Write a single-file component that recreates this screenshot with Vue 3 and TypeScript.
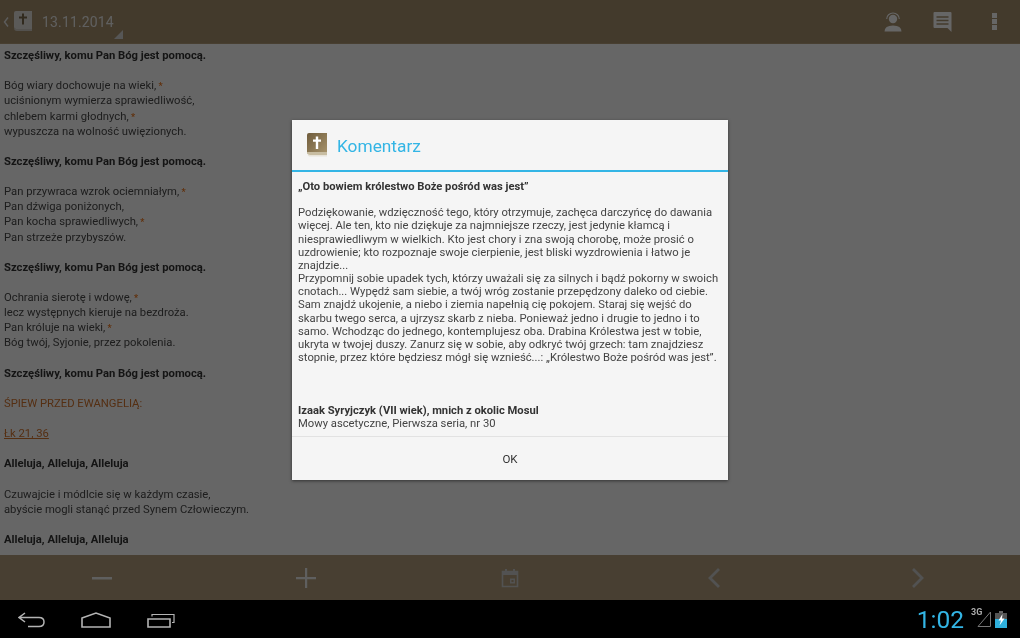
<script setup lang="ts">
interface Line {
  text: string;
  kind?: "bold" | "red" | "link" | "gap";
  star?: boolean;
}

const psalm: Line[] = [
  { text: "Szczęśliwy, komu Pan Bóg jest pomocą.", kind: "bold" },
  { text: "", kind: "gap" },
  { text: "Bóg wiary dochowuje na wieki,", star: true },
  { text: "uciśnionym wymierza sprawiedliwość," },
  { text: "chlebem karmi głodnych,", star: true },
  { text: "wypuszcza na wolność uwięzionych." },
  { text: "", kind: "gap" },
  { text: "Szczęśliwy, komu Pan Bóg jest pomocą.", kind: "bold" },
  { text: "", kind: "gap" },
  { text: "Pan przywraca wzrok ociemniałym,", star: true },
  { text: "Pan dźwiga poniżonych," },
  { text: "Pan kocha sprawiedliwych,", star: true },
  { text: "Pan strzeże przybyszów." },
  { text: "", kind: "gap" },
  { text: "Szczęśliwy, komu Pan Bóg jest pomocą.", kind: "bold" },
  { text: "", kind: "gap" },
  { text: "Ochrania sierotę i wdowę,", star: true },
  { text: "lecz występnych kieruje na bezdroża." },
  { text: "Pan króluje na wieki,", star: true },
  { text: "Bóg twój, Syjonie, przez pokolenia." },
  { text: "", kind: "gap" },
  { text: "Szczęśliwy, komu Pan Bóg jest pomocą.", kind: "bold" },
  { text: "", kind: "gap" },
  { text: "ŚPIEW PRZED EWANGELIĄ:", kind: "red" },
  { text: "", kind: "gap" },
  { text: "Łk 21, 36", kind: "link" },
  { text: "", kind: "gap" },
  { text: "Alleluja, Alleluja, Alleluja", kind: "bold" },
  { text: "", kind: "gap" },
  { text: "Czuwajcie i módlcie się w każdym czasie," },
  { text: "abyście mogli stanąć przed Synem Człowieczym." },
  { text: "", kind: "gap" },
  { text: "Alleluja, Alleluja, Alleluja", kind: "bold" },
];

const commentary = [
  "Podziękowanie, wdzięczność tego, który otrzymuje, zachęca darczyńcę do dawania",
  "więcej. Ale ten, kto nie dziękuje za najmniejsze rzeczy, jest jedynie kłamcą i",
  "niesprawiedliwym w wielkich. Kto jest chory i zna swoją chorobę, może prosić o",
  "uzdrowienie; kto rozpoznaje swoje cierpienie, jest bliski wyzdrowienia i łatwo je",
  "znajdzie...",
  "Przypomnij sobie upadek tych, którzy uważali się za silnych i bądź pokorny w swoich",
  "cnotach... Wypędź sam siebie, a twój wróg zostanie przepędzony daleko od ciebie.",
  "Sam znajdź ukojenie, a niebo i ziemia napełnią cię pokojem. Staraj się wejść do",
  "skarbu twego serca, a ujrzysz skarb z nieba. Ponieważ jedno i drugie to jedno i to",
  "samo. Wchodząc do jednego, kontemplujesz oba. Drabina Królestwa jest w tobie,",
  "ukryta w twojej duszy. Zanurz się w sobie, aby odkryć twój grzech: tam znajdziesz",
  "stopnie, przez które będziesz mógł się wznieść...: „Królestwo Boże pośród was jest”.",
];
</script>

<template>
  <div class="screen">
    <div class="app">
      <header class="topbar">
        <div class="home">
          <svg class="chev" width="6" height="12" viewBox="0 0 6 12">
            <path d="M5 1.500 1.500 6 5 10.500" fill="none" stroke="#e6e6e6" stroke-width="1.400" />
          </svg>
          <svg width="18" height="21" viewBox="0 0 18 21">
            <path d="M0 2q0-2 2-2h16v18H2q-2 0-2-2z" fill="#e4e2dc" />
            <path d="M0 17q0 3 3 3h15v-2H2z" fill="#cfcbc2" />
            <path d="M8 2.500h2v3h3v2h-3v6H8v-6H5v-2h3z" fill="#7a6a4c" />
          </svg>
          <span class="date">13.11.2014</span>
          <span class="corner"></span>
        </div>
        <div class="actions">
          <svg width="20" height="20" viewBox="0 0 20 20">
            <circle cx="10" cy="7" r="4.200" fill="#fff" />
            <path d="M3.700 7a6.300 6 0 0 1 12.600 0" fill="none" stroke="#fff" stroke-width="1.100" />
            <path d="M1.500 19.500q0-6 8.500-6t8.500 6z" fill="#fff" />
          </svg>
          <svg width="20" height="20" viewBox="0 0 20 20">
            <path d="M1.500 0h16q1 0 1 1v19l-4-4h-13q-1 0-1-1V1q0-1 1-1z" fill="#fff" />
            <path d="M3.500 5h12M3.500 8.500h12M3.500 12h12" stroke="#a8916e" stroke-width="1.500" />
          </svg>
          <svg class="more" width="5" height="17" viewBox="0 0 5 17">
            <path d="M0 0h5v5H0zM0 6h5v5H0zM0 12h5v5H0z" fill="#fff" />
          </svg>
        </div>
      </header>

      <main class="reading">
        <div v-for="(line, i) in psalm" :key="i" class="line" :class="line.kind">
          {{ line.text }}<span v-if="line.star" class="star"> *</span>
        </div>
      </main>

      <footer class="bottombar">
        <svg width="20" height="20" viewBox="0 0 20 20"><path d="M0 9h20v2.500H0z" fill="#eee" /></svg>
        <svg width="20" height="20" viewBox="0 0 20 20"><path d="M0 9h9V0h2.200v9H20v2.200h-8.800V20H9v-8.800H0z" fill="#eee" /></svg>
        <svg width="18" height="20" viewBox="0 0 18 20">
          <path d="M1.500 3.500h15v15h-15z" fill="none" stroke="#ccc" stroke-width="1.600" />
          <path d="M1 3h16v4H1zM4 1h2v3H4zM12 1h2v3h-2z" fill="#ccc" />
          <path d="M9 10.500h5v5H9z" fill="#ccc" />
          <path d="M10.500 12h2v2h-2z" fill="#b39f7d" />
        </svg>
        <svg width="14" height="20" viewBox="0 0 14 20"><path d="M12 1 3 10l9 9" fill="none" stroke="#ccc" stroke-width="2.800" /></svg>
        <svg width="14" height="20" viewBox="0 0 14 20"><path d="M2 1l9 9-9 9" fill="none" stroke="#ccc" stroke-width="2.800" /></svg>
      </footer>
    </div>

    <nav class="statusbar">
      <div class="navkeys">
        <svg width="27" height="16" viewBox="0 0 27 16">
          <path d="M7 1 1 5.500l6 4.500M1 5.500h20q5 0 5 4.500t-5 4.500H10" fill="none" stroke="#b4b4b4" stroke-width="1.500" />
        </svg>
        <svg width="30" height="16" viewBox="0 0 30 16">
          <path d="M1 6 15 1l14 5v9H1z" fill="none" stroke="#b4b4b4" stroke-width="1.600" />
        </svg>
        <svg width="28" height="15" viewBox="0 0 28 15">
          <path d="M1 6h22v8H1z" fill="none" stroke="#b4b4b4" stroke-width="1.600" />
          <path d="M5 3.500V1.500h22v8h-2" fill="none" stroke="#b4b4b4" stroke-width="1.200" />
        </svg>
      </div>
      <div class="tray">
        <span class="clock">1:02</span>
        <div class="signal">
          <span class="net">3G</span>
          <svg width="14" height="16" viewBox="0 0 14 16">
            <path d="M13.500 1v14.500H1z" fill="none" stroke="#777" stroke-width="1" />
          </svg>
        </div>
        <svg class="battery" width="12" height="17" viewBox="0 0 12 17">
          <path d="M4 0h4v2H4z" fill="#666" />
          <path d="M0 2h12v6H0z" fill="#555" />
          <path d="M0 8h12v9H0z" fill="#2fb0dd" />
          <path d="M7.500 3 3.500 9.500H6L4.500 14.500l5-7H7z" fill="#fff" />
        </svg>
      </div>
    </nav>

    <div class="scrim">
      <section class="dialog">
        <div class="dialog-head">
          <svg width="22" height="25" viewBox="0 0 22 25">
            <defs>
              <linearGradient id="cover" x1="0" y1="0" x2="1" y2="1">
                <stop offset="0" stop-color="#6f5c3c" />
                <stop offset="1" stop-color="#a8946c" />
              </linearGradient>
            </defs>
            <path d="M1 2q0-2 2-2h18v21H3q-2 0-2-2z" fill="url(#cover)" />
            <path d="M1 19q0 3 3 3h17v-3z" fill="#c8bda2" />
            <path d="M1.500 22h19.500v1.500H3z" fill="#e8e4da" />
            <path d="M9.800 3.500h2.400v3H15v2.200h-2.800v7.300H9.800V8.700H7V6.500h2.800z" fill="#fff" />
          </svg>
          <h2>Komentarz</h2>
        </div>
        <div class="dialog-body">
          <p class="bold">„Oto bowiem królestwo Boże pośród was jest”</p>
          <p class="blank"></p>
          <p v-for="(row, i) in commentary" :key="i">{{ row }}</p>
          <div class="source">
            <p class="bold">Izaak Syryjczyk (VII wiek), mnich z okolic Mosul</p>
            <p>Mowy ascetyczne, Pierwsza seria, nr 30</p>
          </div>
        </div>
        <button class="ok">OK</button>
      </section>
    </div>
  </div>
</template>

<style scoped>
.screen {
  position: relative;
  width: 1020px;
  height: 638px;
  overflow: hidden;
  font-family: Roboto, "Noto Sans", sans-serif;
  background: #000;
  filter: blur(0.3px);
}

.app {
  height: 600px;
  display: flex;
  flex-direction: column;
  background: #fff;
}

.topbar {
  height: 44px;
  flex: none;
  display: flex;
  justify-content: space-between;
  align-items: center;
  background: #a8916e;
  border-bottom: 1px solid #b39d7c;
  box-sizing: border-box;
}

.home {
  display: flex;
  align-items: center;
  position: relative;
  width: 123px;
  height: 100%;
  padding-left: 3px;
  box-sizing: border-box;
}

.chev {
  margin-right: 5px;
}

.date {
  margin-left: 10px;
  font-size: 14px;
  letter-spacing: 0.15px;
  color: #eee;
}

.corner {
  position: absolute;
  right: 0;
  bottom: 4px;
  width: 0;
  height: 0;
  border-left: 9px solid transparent;
  border-bottom: 9px solid #d8d8d8;
}

.actions {
  display: flex;
  align-items: center;
  gap: 30px;
  padding-right: 23px;
}

.more {
  margin-left: 9px;
}

.reading {
  flex: 1;
  overflow: hidden;
  padding: 4px 4px 0;
  font-size: 11.25px;
  line-height: 15.13px;
  color: #4a4a4a;
}

.line {
  height: 15.13px;
  white-space: nowrap;
}

.line.bold {
  font-weight: 700;
  color: #333;
}

.line.red {
  color: #d4752f;
}

.line.link {
  color: #d4752f;
  text-decoration: underline;
}

.star {
  color: #f07a20;
  font-size: 9px;
  font-weight: 700;
}

.bottombar {
  height: 45px;
  flex: none;
  display: grid;
  grid-template-columns: repeat(5, 1fr);
  justify-items: center;
  align-items: center;
  background: #b39f7d;
}

.statusbar {
  height: 38px;
  flex: none;
  display: flex;
  justify-content: space-between;
  align-items: center;
  background: #000;
}

.navkeys {
  display: flex;
  align-items: center;
  gap: 36px;
  padding-left: 18px;
  padding-top: 2px;
}

.tray {
  display: flex;
  align-items: center;
  padding-right: 13px;
}

.clock {
  font-size: 24.5px;
  font-weight: 400;
  color: #33b5e5;
  margin-right: 13px;
  padding-top: 1px;
}

.signal {
  position: relative;
  width: 14px;
  height: 16px;
  margin-right: 4px;
}

.signal svg {
  display: block;
}

.net {
  position: absolute;
  left: -6px;
  top: -4px;
  font-size: 9px;
  font-weight: 700;
  color: #aaa;
}

.scrim {
  position: absolute;
  left: 0;
  top: 0;
  width: 1020px;
  height: 600px;
  background: rgba(0, 0, 0, 0.6);
}

.dialog {
  position: absolute;
  left: 292px;
  top: 120px;
  width: 436px;
  height: 360px;
  display: flex;
  flex-direction: column;
  background: #f5f5f5;
  box-shadow: 0 1px 3px rgba(0, 0, 0, 0.5);
}

.dialog-head {
  height: 50px;
  flex: none;
  display: flex;
  align-items: center;
  gap: 9px;
  padding-left: 14px;
  border-bottom: 2px solid #33b5e5;
}

.dialog-head h2 {
  margin: 0;
  padding-top: 1px;
  font-size: 17.3px;
  font-weight: 400;
  color: #33b5e5;
}

.dialog-body {
  flex: 1;
  padding: 8px 6px 0;
  font-size: 11.25px;
  line-height: 13.15px;
  color: #444;
}

.dialog-body p {
  margin: 0;
  white-space: nowrap;
}

.dialog-body .bold {
  font-size: 11.2px;
  font-weight: 700;
  color: #333;
}

.dialog-body .blank {
  height: 13.15px;
}

.source {
  margin-top: 40px;
}

.ok {
  height: 44px;
  flex: none;
  border: 0;
  border-top: 1px solid #e2e2e2;
  background: transparent;
  font-family: inherit;
  font-size: 11.5px;
  color: #333;
}
</style>
